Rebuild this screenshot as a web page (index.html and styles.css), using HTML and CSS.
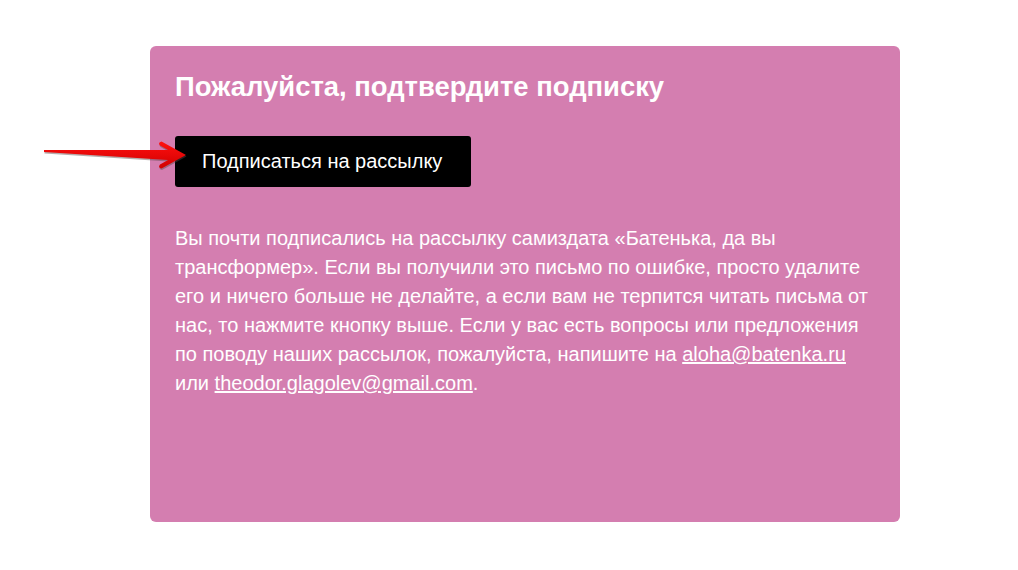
FILE: index.html
```html
<!DOCTYPE html>
<html lang="ru">
<head>
<meta charset="utf-8">
<link rel="stylesheet" href="styles.css">
</head>
<body>
<div class="page">
  <div class="card">
    <h1 class="title">Пожалуйста, подтвердите подписку</h1>
    <div class="btn-row">
      <a class="btn" href="#">Подписаться на рассылку</a>
      <svg class="arrow" width="150" height="34" viewBox="40 138 150 34">
        <defs>
          <linearGradient id="g" x1="0" y1="0" x2="0" y2="1">
            <stop offset="0" stop-color="#ff1010"/>
            <stop offset="1" stop-color="#d00000"/>
          </linearGradient>
        </defs>
        <path d="M44 150 L168 150 L160 145.5 Q157.5 142.5 161.5 141.5 L186 155 L161.5 168.5 Q157.5 167.5 160 164.5 L168 160 L44 152 Z" fill="#5a4a4a" opacity="0.45" transform="translate(0.5 1.5)"/>
        <path d="M44 150 L168 150 L160 145.5 Q157.5 142.5 161.5 141.5 L186 155 L161.5 168.5 Q157.5 167.5 160 164.5 L168 160 L44 152 Z" fill="url(#g)"/>
      </svg>
    </div>
    <p class="text">Вы почти подписались на рассылку самиздата «Батенька, да вы трансформер». Если вы получили это письмо по ошибке, просто удалите его и ничего больше не делайте, а если вам не терпится читать письма от нас, то нажмите кнопку выше. Если у вас есть вопросы или предложения по поводу наших рассылок, пожалуйста, напишите на <a href="#">aloha@batenka.ru</a> или <a href="#">theodor.glagolev@gmail.com</a>.</p>
  </div>
</div>
</body>
</html>
```

FILE: styles.css
```css
html, body {
  margin: 0;
  padding: 0;
  background: #ffffff;
}
body {
  font-family: "Liberation Sans", Arial, sans-serif;
}
.page {
  padding-top: 46px;
  padding-left: 150px;
}
.card {
  width: 750px;
  height: 476px;
  box-sizing: border-box;
  background: #d47eb0;
  border-radius: 6px;
  padding: 25px 25px;
  color: #ffffff;
}
.title {
  margin: 0;
  font-size: 27.4px;
  line-height: 31px;
  font-weight: bold;
}
.btn-row {
  position: relative;
  margin-top: 34px;
  display: flex;
}
.btn {
  display: inline-block;
  background: #000000;
  color: #ffffff;
  text-decoration: none;
  font-size: 20px;
  line-height: 51px;
  height: 51px;
  padding: 0 29px 0 27px;
  border-radius: 3px;
}
.arrow {
  position: absolute;
  left: -135px;
  top: 2px;
}
.text {
  margin: 37px 0 0 0;
  width: 700px;
  font-size: 20px;
  line-height: 29px;
}
.text a {
  color: #ffffff;
  text-decoration: underline;
}
```
